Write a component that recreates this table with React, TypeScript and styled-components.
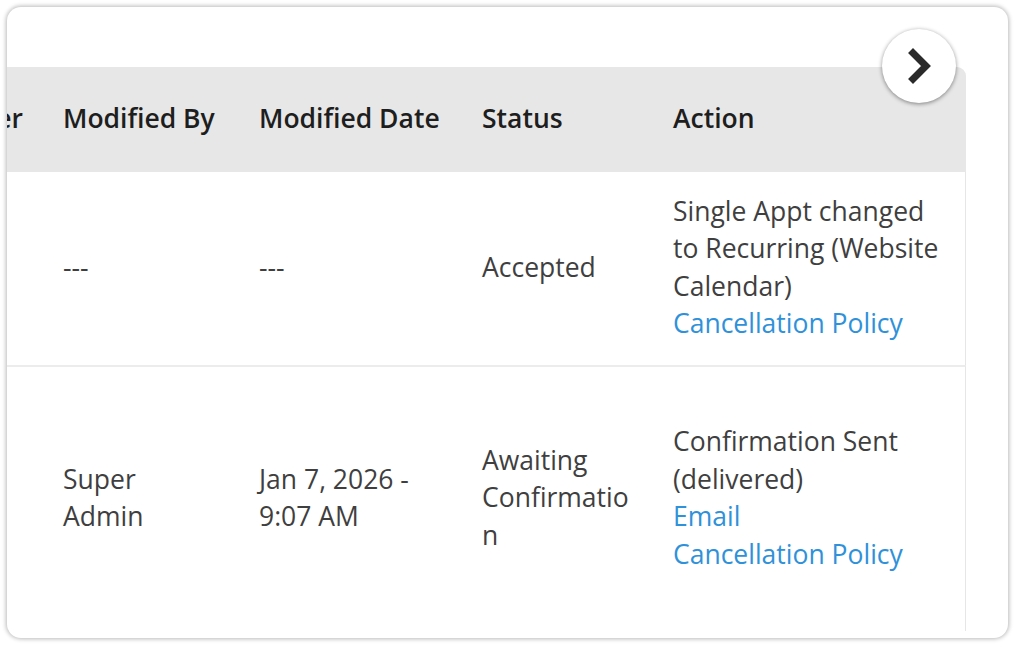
import React, { useLayoutEffect, useRef } from "react";
import styled, { createGlobalStyle } from "styled-components";

const Global = createGlobalStyle`
  html, body { margin: 0; padding: 0; background: #ffffff; }
  body { font-family: "Open Sans", "Noto Sans", sans-serif; }
`;

const Page = styled.div`
  padding: 7px 8px 8px 7px;
  box-sizing: border-box;
  width: 1016px;
  height: 646px;
`;

const Card = styled.div`
  position: relative;
  box-sizing: border-box;
  width: 1001px;
  height: 631px;
  border-radius: 14px;
  background: #fff;
  box-shadow: 0 0 4px 1px rgba(0, 0, 0, 0.28);
  overflow: hidden;
  padding: 60px 42px 0 0;
`;

const Scroller = styled.div`
  width: 100%;
  height: 100%;
  overflow: hidden;
`;

const Table = styled.table`
  table-layout: fixed;
  border-collapse: separate;
  border-spacing: 0;
  width: max-content;
  font-size: 26.5px;
  line-height: 37.5px;
`;

const Th = styled.th<{ $w: number; $last?: boolean; $align?: string }>`
  width: ${(p) => p.$w}px;
  box-sizing: border-box;
  height: 105px;
  padding: 0 20px 2px;
  background: #e7e7e7;
  color: #1e1e1e;
  font-weight: 600;
  text-align: ${(p) => p.$align ?? "left"};
  white-space: nowrap;
  border-top-right-radius: ${(p) => (p.$last ? "9px" : "0")};
`;

const Td = styled.td<{ $h: number; $first?: boolean; $last?: boolean }>`
  box-sizing: border-box;
  height: ${(p) => p.$h}px;
  padding: 20px 20px 22px;
  vertical-align: middle;
  color: #3f3f3f;
  overflow-wrap: anywhere;
  border-top: ${(p) => (p.$first ? "none" : "2px solid #ececec")};
  border-right: ${(p) => (p.$last ? "1px solid #e6e6e6" : "none")};
`;

const Link = styled.a`
  display: block;
  color: #2f91d9;
  text-decoration: none;
`;

const NextButton = styled.button`
  position: absolute;
  left: 875px;
  top: 22px;
  width: 74px;
  height: 74px;
  border-radius: 50%;
  border: none;
  background: #fff;
  box-shadow: 0 1px 4px rgba(0, 0, 0, 0.45);
  display: flex;
  align-items: center;
  justify-content: center;
  padding: 0;
  cursor: pointer;
`;

const cols = [
  { key: "created", title: "Created Date", w: 230, align: "left" },
  { key: "provider", title: "Provider", w: 182, align: "right" },
  { key: "modBy", title: "Modified By", w: 196, align: "left" },
  { key: "modDate", title: "Modified Date", w: 223, align: "left" },
  { key: "status", title: "Status", w: 191, align: "left" },
  { key: "action", title: "Action", w: 313, align: "left" },
];

export default function App() {
  const scrollRef = useRef<HTMLDivElement>(null);
  const anchorRef = useRef<HTMLTableCellElement>(null);

  useLayoutEffect(() => {
    if (scrollRef.current && anchorRef.current) {
      scrollRef.current.scrollLeft = anchorRef.current.offsetLeft - 36;
    }
  }, []);

  return (
    <>
      <Global />
      <Page>
        <Card>
          <Scroller ref={scrollRef}>
            <Table>
              <thead>
                <tr>
                  {cols.map((c, i) => (
                    <Th
                      key={c.key}
                      $w={c.w}
                      $align={c.align}
                      $last={i === cols.length - 1}
                      ref={c.key === "modBy" ? anchorRef : undefined}
                    >
                      {c.title}
                    </Th>
                  ))}
                </tr>
              </thead>
              <tbody>
                <tr>
                  <Td $h={193} $first>Jan 7, 2026</Td>
                  <Td $h={193} $first>Staff</Td>
                  <Td $h={193} $first>---</Td>
                  <Td $h={193} $first>---</Td>
                  <Td $h={193} $first>Accepted</Td>
                  <Td $h={193} $first $last>
                    Single Appt changed to Recurring (Website Calendar)
                    <Link href="#">Cancellation Policy</Link>
                  </Td>
                </tr>
                <tr>
                  <Td $h={266}>Jan 7, 2026</Td>
                  <Td $h={266}>Staff</Td>
                  <Td $h={266}>Super Admin</Td>
                  <Td $h={266}>Jan 7, 2026 - 9:07 AM</Td>
                  <Td $h={266}>Awaiting Confirmation</Td>
                  <Td $h={266} $last>
                    Confirmation Sent (delivered)
                    <Link href="#">Email</Link>
                    <Link href="#">Cancellation Policy</Link>
                  </Td>
                </tr>
              </tbody>
            </Table>
          </Scroller>
          <NextButton aria-label="Next">
            <svg width="30" height="38" viewBox="0 0 30 38">
              <path
                d="M9 6 L22 19 L9 32"
                fill="none"
                stroke="#2a2a2a"
                strokeWidth="7"
                strokeLinecap="square"
                strokeLinejoin="miter"
              />
            </svg>
          </NextButton>
        </Card>
      </Page>
    </>
  );
}
